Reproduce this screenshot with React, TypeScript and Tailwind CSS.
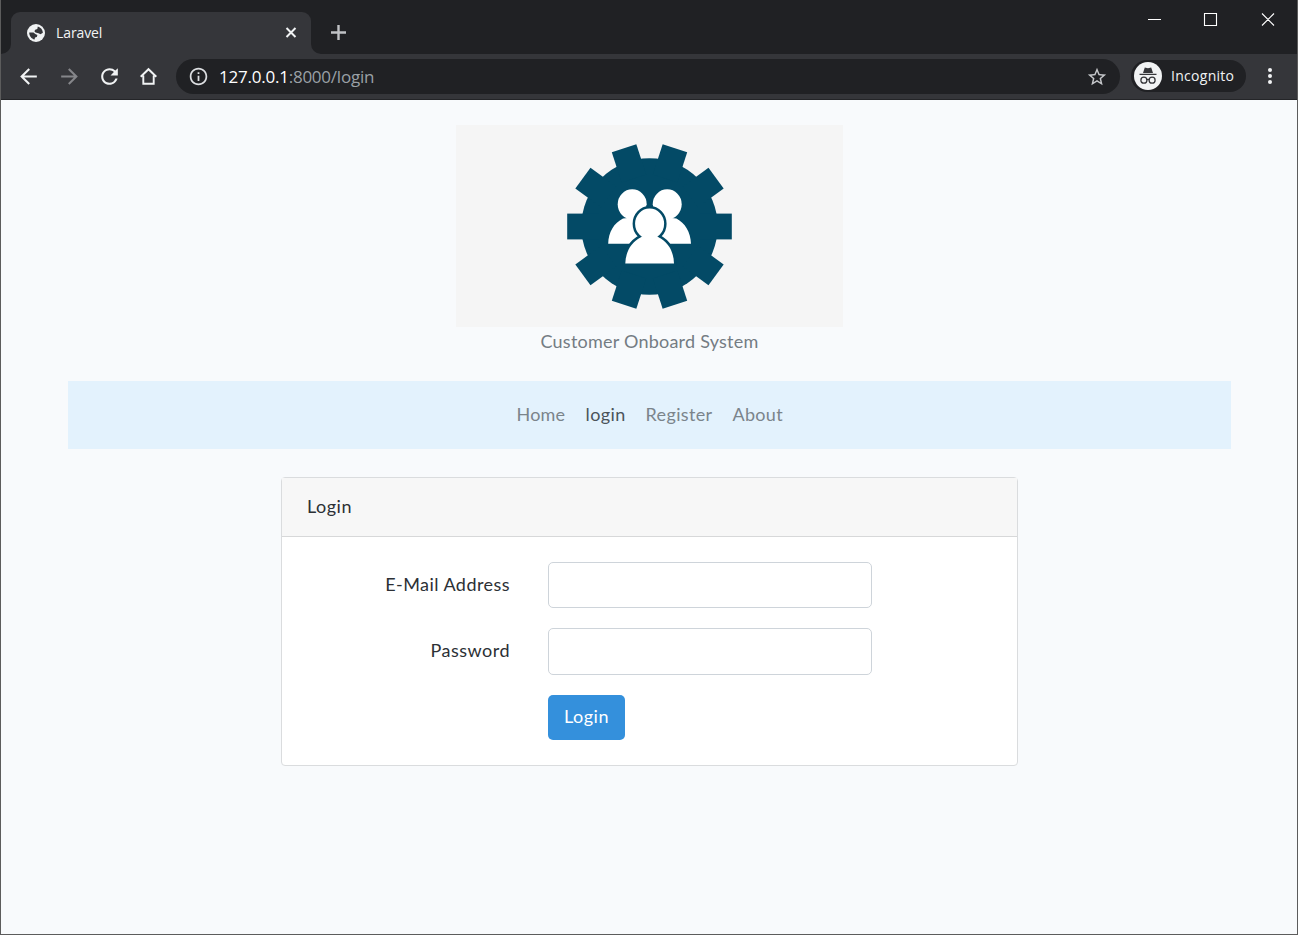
import React from "react";
import { MdArrowBack, MdArrowForward, MdInfoOutline, MdRefresh, MdStarBorder } from "react-icons/md";

function TabStrip() {
  return (
    <div className="flex h-[54px] bg-[#202124] pl-[10px]">
      <div className="relative mt-3 flex h-[42px] w-[300px] items-center rounded-t-[9px] bg-[#35363a] pr-3 pl-[16px]">
        <svg className="absolute bottom-0 -left-[10px] h-[10px] w-[10px]" viewBox="0 0 10 10" fill="#35363a"><path d="M10 0v10H0A10 10 0 0 0 10 0z" /></svg>
        <svg className="absolute -right-[10px] bottom-0 h-[10px] w-[10px]" viewBox="0 0 10 10" fill="#35363a"><path d="M0 0v10h10A10 10 0 0 1 0 0z" /></svg>
        <svg className="size-[18px]" viewBox="0 0 18 18">
          <circle cx="9" cy="9" r="9" fill="#f1f3f4" />
          <path d="M10.800 2.500C13.700 3.300 15.800 5.800 15.900 8.800L13.500 10.300 11.500 9.200 8.500 8.600 7.400 7.200 8.200 5.700 10.300 5zM2.200 8.600H6.500L8.300 9.900 10.400 11 9.800 13 8 13.600 7.600 15.600C4.500 14.900 2.200 12.200 2.200 8.600z" fill="#35363a" />
        </svg>
        <span className="relative -top-px ml-[11px] text-[14px] tracking-[-0.1px] text-[#f1f3f4]">Laravel</span>
        <svg className="ml-auto size-4" viewBox="0 0 16 16" stroke="#f1f3f4" strokeWidth="2"><path d="M3.500 3l9 9M12.500 3l-9 9" /></svg>
      </div>
      <svg className="mt-6 ml-[19px] size-4" viewBox="0 0 16 16" stroke="#c0c2c5" strokeWidth="2.400"><path d="M8.500 1v15M1 8.500h15" /></svg>
      <svg className="mt-[12px] mr-[21px] ml-auto h-4 w-[130px]" viewBox="0 0 130 16" fill="none" stroke="#fff" strokeWidth="1.100">
        <path d="M2 7.500h13M58.500 1.500h12v12h-12zM116 1.500l12 12M128 1.500l-12 12" />
      </svg>
    </div>
  );
}

function Toolbar() {
  return (
    <div className="flex h-[46px] items-center border-b border-[#242528] bg-[#35363a] pb-px pl-[15px] text-[#f1f3f4]">
      <MdArrowBack className="size-[25px]" />
      <MdArrowForward className="ml-4 size-[25px] text-[#85868a]" />
      <MdRefresh className="ml-[15px] size-[25px]" />
      <svg className="ml-[17px] size-5" viewBox="0 0 20 20" fill="none" stroke="#f1f3f4" strokeWidth="1.900"><path d="M1.700 10.800L9.500 3.200l7.800 7.600M4.300 9.500v8.200h10.400V9.500" /></svg>
      <div className="mt-px ml-[17px] flex h-[35px] w-[944px] items-center rounded-full bg-[#202124] pr-3 pl-3">
        <MdInfoOutline className="size-[21px] text-[#dcdee1]" />
        <span className="ml-[10px] text-[17px] tracking-[-0.23px] text-[#9aa0a6]"><span className="text-white">127.0.0.1</span>:8000/login</span>
        <MdStarBorder className="ml-auto size-[22px] text-[#c6c8cb]" />
      </div>
      <div className="ml-[11px] flex h-8 w-[115px] items-center rounded-full bg-[#202124] pl-[3px]">
        <svg className="size-7" viewBox="0 0 28 28">
          <circle cx="14" cy="14" r="14" fill="#f1f3f4" />
          <path d="M10.800 5.500l3.200.8 3.200-.8 1.800 5.500H9zM5.500 11.800h17v1.300h-17z" fill="#35363a" />
          <g fill="none" stroke="#35363a" strokeWidth="1.300"><circle cx="9.900" cy="18.200" r="3" /><circle cx="18.100" cy="18.200" r="3" /><path d="M12.800 17.800q1.200-.8 2.400 0" /></g>
        </svg>
        <span className="relative -top-px ml-[9px] text-[14px] tracking-[0.28px] text-[#f1f3f4]">Incognito</span>
      </div>
      <svg className="ml-[20px] h-5 w-2" viewBox="0 0 8 20" fill="#f1f3f4"><circle cx="4" cy="4" r="2" /><circle cx="4" cy="10" r="2" /><circle cx="4" cy="16" r="2" /></svg>
    </div>
  );
}

const TEETH = [0, 36, 72, 108, 144, 180, 216, 252, 288, 324];

function Logo() {
  return (
    <svg className="block h-[202px] w-[387px] bg-[#f5f5f5]" viewBox="456 125 387 202">
      <g fill="#034a66">
        <circle cx="649.5" cy="226.5" r="68.200" />
        {TEETH.map((a) => <rect key={a} x="700" y="213.600" width="31.800" height="25.800" transform={`rotate(${a} 649.5 226.5)`} />)}
      </g>
      <g fill="#fff">
        <ellipse cx="632.200" cy="204.300" rx="14.500" ry="15" />
        <ellipse cx="667.200" cy="204.300" rx="14.500" ry="15" />
        <path d="M623 218.500C614 223 608.500 232 608.200 243.800H646V216zM676.400 218.500C685 223 690.600 232 691 243.800H653V216z" />
      </g>
      <path d="M646.500 205h6.300v12h-6.300z" fill="#034a66" />
      <g fill="#fff" stroke="#034a66" strokeWidth="5" paintOrder="stroke">
        <path d="M640.500 237.500C631.500 242 625.600 251.500 625.300 263.500H674C673.700 251.500 668 242 659 237.500z" />
        <ellipse cx="649.600" cy="223.800" rx="14.500" ry="15.200" />
      </g>
      <path d="M640.500 237.500L649.600 232L659 237.500L664 243H635z" fill="#fff" />
    </svg>
  );
}

export default function App() {
  return (
    <div className="flex h-[935px] w-[1298px] flex-col overflow-hidden border border-t-0 border-[#5c5c5c] bg-[#f8fafc] font-['Open_Sans','Noto_Sans',sans-serif]">
      <TabStrip />
      <Toolbar />
      <main className="flex w-[1297px] flex-1 flex-col items-center pt-[25px] font-['Lato',sans-serif] text-[18px] leading-7 text-[#2c3035]">
        <Logo />
        <p className="h-7 tracking-[0.23px] text-[#747c83]">Customer Onboard System</p>
        <nav className="mt-[26px] flex h-[68px] w-[1163px] items-center justify-center gap-5 bg-[#e3f2fd] pb-[2px] text-[#7b848b]">
          <a className="w-[49px] whitespace-nowrap tracking-[0.2px]">Home</a>
          <a className="w-[40px] whitespace-nowrap tracking-[0.4px] text-[#4b545a]">login</a>
          <a className="w-[67px] whitespace-nowrap tracking-[0.36px]">Register</a>
          <a className="w-[50px] whitespace-nowrap tracking-[0.3px]">About</a>
        </nav>
        <section className="mt-7 h-[289px] w-[737px] rounded-[4px] border border-[#dadcde] bg-white">
          <h1 className="flex h-[59px] items-center border-b border-[#d7d8d9] bg-[#f7f7f7] pb-[2px] pl-[25px] tracking-[0.5px]">Login</h1>
          <form className="grid grid-cols-[228px_324px] gap-x-[38px] pt-[25px]">
            <label className="flex h-[46px] items-center justify-end pb-[2px] tracking-[0.45px]">E-Mail Address</label>
            <input className="h-[46px] rounded-[5px] border border-[#ced4da]" />
            <label className="mt-5 flex h-[46px] items-center justify-end pb-[2px] tracking-[0.5px]">Password</label>
            <input type="password" className="mt-5 h-[47px] rounded-[5px] border border-[#ced4da]" />
            <button type="button" className="col-start-2 mt-5 h-[45px] w-[77px] rounded-[5px] bg-[#3490dc] pb-[4px] tracking-[0.5px] text-white">Login</button>
          </form>
        </section>
      </main>
    </div>
  );
}
